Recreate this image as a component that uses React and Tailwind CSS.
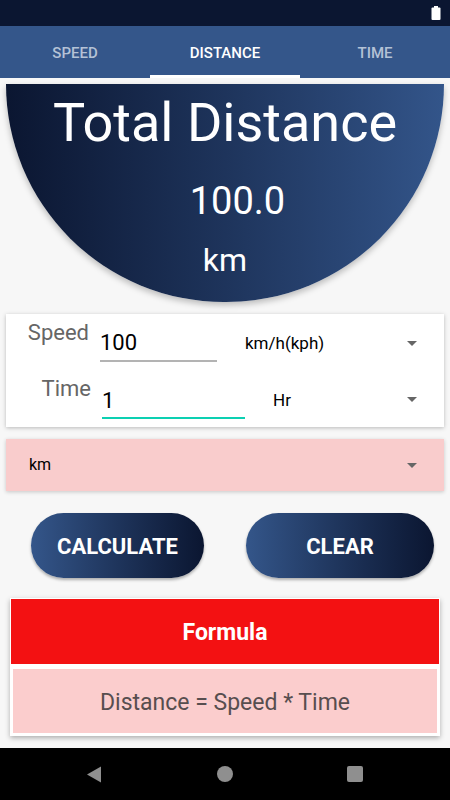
import React from "react";

function Caret({ className }) {
  return (
    <svg width="10" height="5" viewBox="0 0 10 5" className={className}>
      <path d="M0 0 L10 0 L5 5 Z" fill="#666666" />
    </svg>
  );
}

export default function App() {
  return (
    <div
      className="w-[450px] h-[800px] flex flex-col bg-[#f7f7f7] overflow-hidden"
      style={{ fontFamily: "Roboto, 'Noto Sans', sans-serif" }}
    >
      {/* status bar */}
      <div className="h-[26px] bg-[#0b1631] flex items-center justify-end pr-[9px]">
        <svg width="10" height="14" viewBox="0 0 10 14">
          <rect x="3" y="0" width="4" height="2" fill="#fff" />
          <rect x="0.5" y="1.5" width="9" height="12.5" rx="1" fill="#fff" />
        </svg>
      </div>
      {/* tabs */}
      <div className="h-[52px] bg-[#34568a] flex">
        <div className="w-[150px] flex items-center justify-center pt-[2px] text-[15px] font-medium text-[#b4c2d6]">
          SPEED
        </div>
        <div className="w-[150px] flex flex-col items-center">
          <div className="flex-1 flex items-center justify-center pt-[5px] text-[15px] font-medium text-white">
            DISTANCE
          </div>
          <div className="h-[3px] w-full bg-white" />
        </div>
        <div className="w-[150px] flex items-center justify-center pt-[2px] text-[15px] font-medium text-[#b4c2d6]">
          TIME
        </div>
      </div>

      {/* half circle */}
      <div className="mx-[6px] mt-[6px] h-[218px] rounded-b-[219px] bg-gradient-to-r from-[#0b1631] to-[#33558a] shadow-[0_3px_6px_rgba(0,0,0,0.25)] flex flex-col items-center text-white">
        <div className="mt-[12px] text-[54px] leading-[54px]">Total Distance</div>
        <div className="mt-[32px] text-[38px] leading-[38px] pl-[25px]">100.0</div>
        <div className="mt-[24px] text-[32px] leading-[32px]">km</div>
      </div>

      {/* inputs card */}
      <div className="mx-[6px] mt-[12px] h-[113px] bg-white shadow-[0_1px_4px_rgba(0,0,0,0.25)] flex flex-col">
        <div className="h-[56px] flex items-start">
          <div className="w-[83px] mt-[6px] text-right text-[22px] leading-[26px] text-[#666666]">Speed</div>
          <div className="ml-[11px] mt-[16px] w-[117px] border-b-2 border-[#b3b3b3] pb-[4px] text-[22px] leading-[26px] text-black">
            100
          </div>
          <div className="ml-[28px] mt-[19px] text-[17px] leading-[20px] text-black">km/h(kph)</div>
          <Caret className="ml-auto mr-[27px] mt-[27px]" />
        </div>
        <div className="h-[57px] flex items-start">
          <div className="w-[85px] mt-[6px] text-right text-[22px] leading-[26px] text-[#666666]">Time</div>
          <div className="ml-[11px] mt-[18px] w-[143px] border-b-2 border-[#0cd0b2] pb-[3px] text-[22px] leading-[26px] text-black">
            1
          </div>
          <div className="ml-[28px] mt-[20px] text-[17px] leading-[20px] text-black">Hr</div>
          <Caret className="ml-auto mr-[27px] mt-[27px]" />
        </div>
      </div>

      {/* unit select */}
      <div className="mx-[6px] mt-[12px] h-[52px] bg-[#f9cccc] shadow-[0_1px_4px_rgba(0,0,0,0.2)] flex items-center pl-[23px] pr-[27px]">
        <div className="text-[16px] leading-[20px] text-black">km</div>
        <Caret className="ml-auto" />
      </div>

      {/* buttons */}
      <div className="mt-[22px] flex">
        <div className="ml-[31px] w-[173px] h-[65px] rounded-full bg-gradient-to-r from-[#34568a] to-[#0b1631] shadow-[0_2px_3px_rgba(0,0,0,0.3)] flex items-center justify-center pt-[1px] text-white text-[22px] font-bold">
          CALCULATE
        </div>
        <div className="ml-[42px] w-[188px] h-[65px] rounded-full bg-gradient-to-r from-[#34568a] to-[#0b1631] shadow-[0_2px_3px_rgba(0,0,0,0.3)] flex items-center justify-center pt-[1px] text-white text-[22px] font-bold">
          CLEAR
        </div>
      </div>

      {/* formula card */}
      <div className="mx-[10px] mt-[20px] h-[138px] bg-white shadow-[0_2px_5px_rgba(0,0,0,0.3)] flex flex-col">
        <div className="mx-[1px] mt-[1px] h-[65px] bg-[#f31112] flex items-center justify-center pt-[4px] text-white text-[23px] font-bold">
          Formula
        </div>
        <div className="mx-[3px] mt-[5px] h-[64px] bg-[#fbcdcd] flex items-center justify-center pt-[4px] text-[23px] text-[#574e4f]">
          Distance = Speed * Time
        </div>
      </div>

      <div className="flex-1" />

      {/* nav bar */}
      <div className="h-[52px] bg-black flex items-center">
        <svg width="16" height="17" viewBox="0 0 16 17" className="ml-[86px]">
          <path d="M15 0.5 L15 16.5 L1 8.5 Z" fill="#8f8f8f" />
        </svg>
        <div className="ml-[115px] w-[16px] h-[16px] rounded-full bg-[#8f8f8f]" />
        <div className="ml-[114px] w-[16px] h-[16px] rounded-[2px] bg-[#8f8f8f]" />
      </div>
    </div>
  );
}
